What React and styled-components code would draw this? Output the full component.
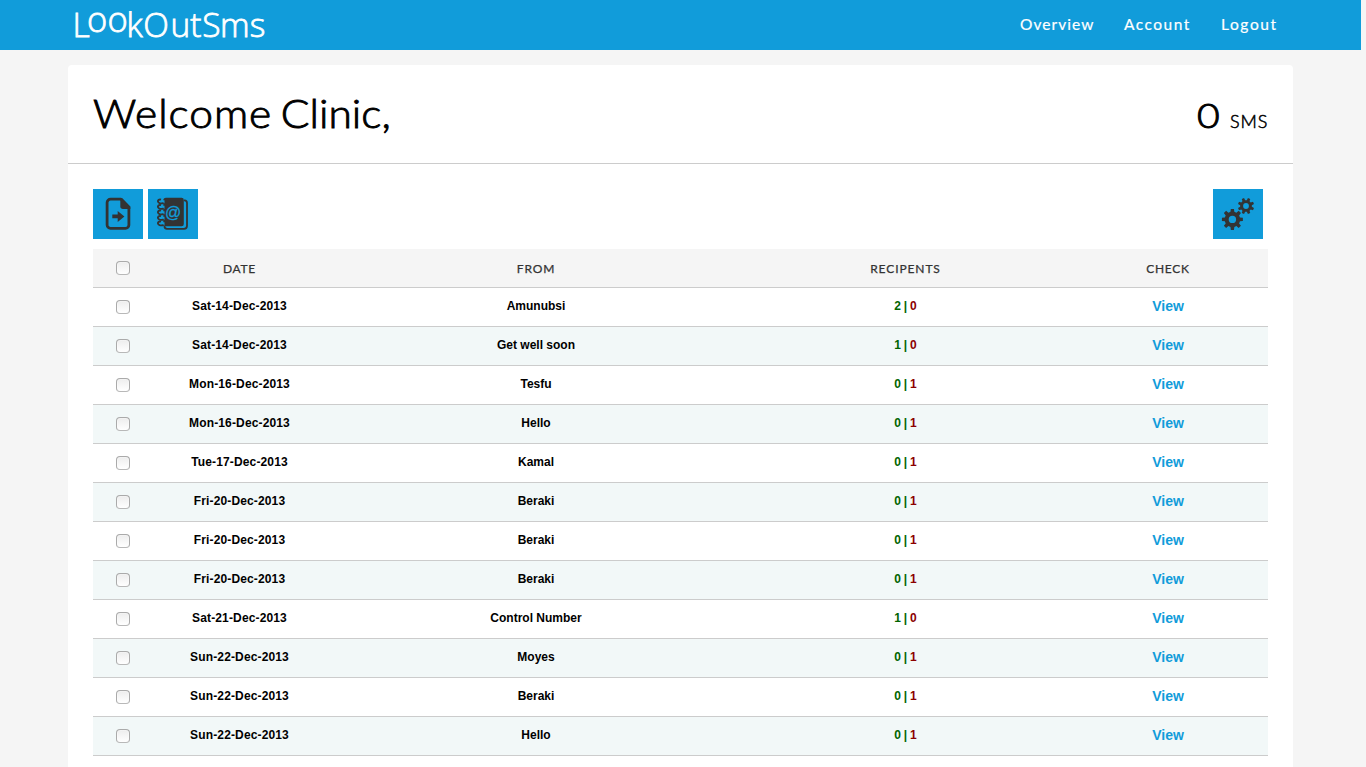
import React from 'react';
import styled, { createGlobalStyle } from 'styled-components';

const BLUE = '#119cda';
const DARK = '#333333';

const GlobalStyle = createGlobalStyle`
  * { box-sizing: border-box; }
  html { height: 100%; overflow: hidden; background: #f5f5f5; }
  body {
    margin: 0 5px 0 0;
    height: 100%;
    overflow: hidden;
    font-family: "Liberation Sans", Arial, sans-serif;
    color: #000;
  }
`;

const TopBar = styled.header`
  display: flex;
  justify-content: space-between;
  height: 50px;
  padding: 0 84px 0 68px;
  background: ${BLUE};
`;

const LogoSvg = styled.svg`
  display: block;
  overflow: visible;
  font-family: "Open Sans", sans-serif;
  font-weight: 300;
  font-size: 33.5px;
  fill: #fff;
  stroke: #fff;
  stroke-width: 0.8px;
`;

const Nav = styled.nav`
  display: flex;
  gap: 30px;
  padding-top: 14px;
`;

const NavLink = styled.a`
  width: ${(p) => p.$width}px;
  white-space: nowrap;
  color: #fff;
  font: 400 15.5px/20px Lato, sans-serif;
  letter-spacing: ${(p) => p.$spacing}px;
  -webkit-text-stroke: 0.2px #fff;
`;

const Card = styled.main`
  margin: 15px auto 0;
  width: 1225px;
  height: 702px;
  overflow: hidden;
  background: #fff;
  border-radius: 4px 4px 0 0;
`;

const Heading = styled.div`
  display: flex;
  justify-content: space-between;
  height: 99px;
  padding: 24px 25px 0;
  border-bottom: 1px solid #ccc;
`;

const Title = styled.h1`
  margin: 0;
  white-space: nowrap;
  font: 300 39px/48px Lato, sans-serif;
  letter-spacing: 0.9px;
  word-spacing: -3.8px;
  -webkit-text-stroke: 0.9px #000;
  transform: scaleX(1.09);
  transform-origin: left;
`;

const Name = styled.span`
  letter-spacing: 0.05px;
`;

const Credit = styled.div`
  display: flex;
  align-items: baseline;
  padding-top: 2px;
  font: 400 18px/48px Lato, sans-serif;
  gap: 10px;
`;

const Amount = styled.span`
  font-size: 34px;
  font-weight: 300;
  -webkit-text-stroke: 1px #000;
  transform: scaleX(1.15);
  transform-origin: right;
`;

const Unit = styled.span`
  width: 38px;
  font-weight: 300;
  letter-spacing: 0.9px;
  -webkit-text-stroke: 0.5px #000;
`;

const Content = styled.section`
  padding: 25px 25px 0;
`;

const Toolbar = styled.div`
  display: flex;
  gap: 5px;
  height: 60px;
  padding-right: 5px;
`;

const ToolButton = styled.button`
  width: 50px;
  height: 50px;
  padding: 0;
  border: 0;
  background: ${BLUE};
  margin-left: ${(p) => (p.$end ? 'auto' : '0')};

  svg { display: block; }
`;

const Row = styled.div`
  display: grid;
  grid-template-columns: 57px 179px 414px 325px 200px;
  height: 39px;
  border-bottom: 1px solid #ccc;
  text-align: center;
  background: ${(p) => (p.$tinted ? '#f2f8f8' : '#fff')};
  font: 700 12px/36px "Liberation Sans", Arial, sans-serif;
`;

const HeadRow = styled(Row)`
  background: #f5f5f5;
  color: ${DARK};
  font: 400 12px/40px Lato, sans-serif;
`;

const HeadCell = styled.div`
  letter-spacing: ${(p) => p.$spacing}px;
  -webkit-text-stroke: 0.25px ${DARK};
`;

const DateCell = styled.div`
  letter-spacing: 0.14px;
`;

const CheckCell = styled.div`
  padding: 12px 0 0 23px;
`;

const Checkbox = styled.input.attrs({ type: 'checkbox' })`
  appearance: none;
  display: block;
  width: 14px;
  height: 14px;
  margin: 0;
  border: 1px solid #aaa;
  border-bottom-color: #b8b8b8;
  border-radius: 4px;
  background: linear-gradient(#ededed, #fff);
  box-shadow: inset 0 0 0 1px rgba(255, 255, 255, 0.3);
`;

const Sent = styled.span`
  color: #006400;
`;

const Failed = styled.span`
  color: #8b0000;
`;

const Counts = styled.div`
  word-spacing: -0.7px;
  letter-spacing: 0.1px;
`;

const ViewLink = styled.a`
  color: ${BLUE};
  font-size: 14px;
`;

const Logo = () => (
  <LogoSvg width="210" height="50" aria-label="LookOutSms">
    <text y="37">
      <tspan x="4.6">L</tspan>
      <tspan x="19 39.5" y="31.5" fontSize="34.5">oo</tspan>
      <tspan x="58.6 75.3 102.6 122.3 134.3 152 181.8" y="37">kOutSms</tspan>
    </text>
  </LogoSvg>
);

const FileArrowIcon = () => (
  <svg width="50" height="50" fill="none" stroke={DARK} strokeLinejoin="round">
    <path strokeWidth="2.8" d="M28 10.2H17.5a3.4 3.4 0 0 0-3.4 3.4v22.3a3.4 3.4 0 0 0 3.4 3.4h15a3.4 3.4 0 0 0 3.4-3.4V18.5z" />
    <path fill={DARK} stroke="none" d="M27.3 9.2h2l8 8.3v2.5H30a2.7 2.7 0 0 1-2.7-2.7z" />
    <path fill={DARK} stroke="none" d="M19.3 25.5h5.4v-3.6l6.7 5.5-6.7 5.5v-3.6h-5.4z" />
  </svg>
);

const AddressBookIcon = () => (
  <svg width="50" height="50">
    <path fill={DARK} d="M18 8.7h15.6q2.2 0 2.2 2.2V35q0 2.3-2.2 2.3H18q-2.7 0-2.7-2.7V11.4q0-2.7 2.7-2.7z" />
    <path fill="none" stroke={DARK} strokeWidth="1.8" d="M36 11.4h.6q2.4.2 2.4 2.7v22.7q0 3-3 3H19q-2.3 0-2.7-2.8" />
    {[11.5, 17, 22.5, 28, 33.5].map((y) => (
      <g key={y} fill="none">
        <path stroke={BLUE} strokeWidth="3" d={`M13.5 ${y + 1.2}h3`} />
        <path stroke={DARK} strokeWidth="1.9" d={`M15.6 ${y + 2.2}q-1.6 1.2-4 .4q-2.6-1.2-1.2-3q1.2-.9 2.6-.4`} />
      </g>
    ))}
    <text x="25.2" y="28.6" textAnchor="middle" fill={BLUE} fontFamily="Liberation Sans" fontWeight="400" fontSize="16" stroke={BLUE} strokeWidth="0.3">@</text>
  </svg>
);

const gearPath = (cx, cy, outer, inner, hole, turn) => {
  const points = [];
  for (let i = 0; i < 8; i += 1) {
    const a = (i * Math.PI) / 4 + turn;
    [[-0.25, inner], [-0.15, outer], [0.15, outer], [0.25, inner]].forEach(([d, r]) => {
      points.push(`${(cx + r * Math.cos(a + d)).toFixed(2)} ${(cy + r * Math.sin(a + d)).toFixed(2)}`);
    });
  }
  return `M${points.join('L')}ZM${cx - hole} ${cy}a${hole} ${hole} 0 1 0 ${2 * hole} 0a${hole} ${hole} 0 1 0 ${-2 * hole} 0Z`;
};

const GearsIcon = () => (
  <svg width="50" height="50" fill={DARK} fillRule="evenodd">
    <path d={gearPath(19.4, 30.4, 10.6, 7.8, 3.7, 0)} />
    <path d={gearPath(33, 17, 8.2, 5.9, 2.9, Math.PI / 8)} />
  </svg>
);

const messages = [
  ['Sat-14-Dec-2013', 'Amunubsi', 2, 0],
  ['Sat-14-Dec-2013', 'Get well soon', 1, 0],
  ['Mon-16-Dec-2013', 'Tesfu', 0, 1],
  ['Mon-16-Dec-2013', 'Hello', 0, 1],
  ['Tue-17-Dec-2013', 'Kamal', 0, 1],
  ['Fri-20-Dec-2013', 'Beraki', 0, 1],
  ['Fri-20-Dec-2013', 'Beraki', 0, 1],
  ['Fri-20-Dec-2013', 'Beraki', 0, 1],
  ['Sat-21-Dec-2013', 'Control Number', 1, 0],
  ['Sun-22-Dec-2013', 'Moyes', 0, 1],
  ['Sun-22-Dec-2013', 'Beraki', 0, 1],
  ['Sun-22-Dec-2013', 'Hello', 0, 1],
];

export default function App() {
  return (
    <>
      <GlobalStyle />
      <TopBar>
        <Logo />
        <Nav>
          <NavLink $width={74} $spacing={1.05}>Overview</NavLink>
          <NavLink $width={67} $spacing={1.5}>Account</NavLink>
          <NavLink $width={56} $spacing={1.6}>Logout</NavLink>
        </Nav>
      </TopBar>
      <Card>
        <Heading>
          <Title>Welcome <Name>Clinic,</Name></Title>
          <Credit>
            <Amount>0</Amount>
            <Unit>SMS</Unit>
          </Credit>
        </Heading>
        <Content>
          <Toolbar>
            <ToolButton aria-label="Export"><FileArrowIcon /></ToolButton>
            <ToolButton aria-label="Contacts"><AddressBookIcon /></ToolButton>
            <ToolButton $end aria-label="Settings"><GearsIcon /></ToolButton>
          </Toolbar>
          <HeadRow>
            <CheckCell><Checkbox /></CheckCell>
            <HeadCell $spacing={0.7}>DATE</HeadCell>
            <HeadCell $spacing={0.9}>FROM</HeadCell>
            <HeadCell $spacing={0.9}>RECIPENTS</HeadCell>
            <HeadCell $spacing={0.7}>CHECK</HeadCell>
          </HeadRow>
          {messages.map(([date, from, sent, failed], i) => (
            <Row key={i} $tinted={i % 2 === 1}>
              <CheckCell><Checkbox /></CheckCell>
              <DateCell>{date}</DateCell>
              <div>{from}</div>
              <Counts><Sent>{sent} |</Sent> <Failed>{failed}</Failed></Counts>
              <div><ViewLink>View</ViewLink></div>
            </Row>
          ))}
        </Content>
      </Card>
    </>
  );
}
